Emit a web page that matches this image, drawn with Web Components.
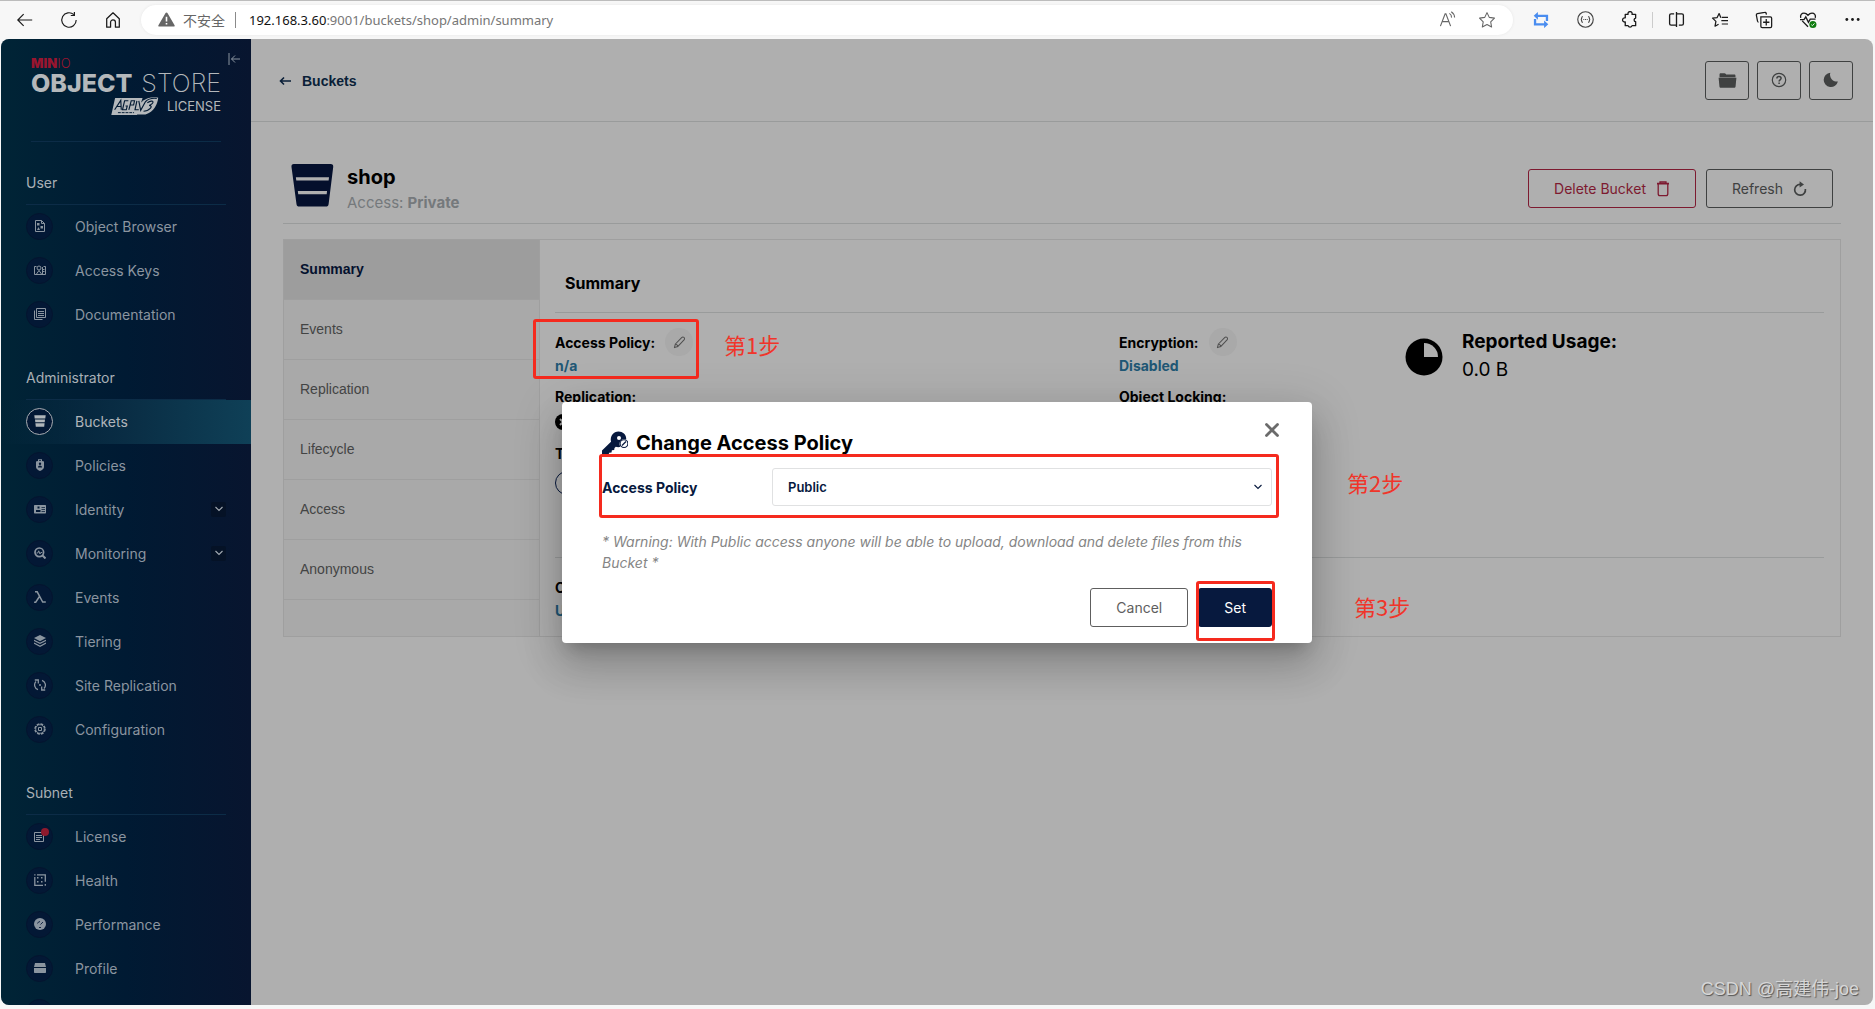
<!DOCTYPE html>
<html lang="en">
<head>
<meta charset="utf-8">
<title>MinIO Console</title>
<style>
  html, body { height: 100%; }
  body { margin: 0; display: flex; flex-direction: column; background: #f6f7f7; font-family: Inter, "Noto Sans CJK SC", sans-serif; font-size: 14px; overflow: hidden; }
</style>
</head>
<body>
<browser-bar></browser-bar>
<console-app></console-app>

<script>
const define = (name, html, setup) => {
  const template = document.createElement('template');
  template.innerHTML = html;
  customElements.define(name, class extends HTMLElement {
    constructor() {
      super();
      this.attachShadow({ mode: 'open' }).append(template.content.cloneNode(true));
    }
    connectedCallback() { if (setup) setup.call(this, this.shadowRoot); }
  });
};

/* Stroked icons inherit currentColor; every entry is [viewBox, markup]. */
const S = 'fill="none" stroke="currentColor"';
const ICONS = {
  back: ['0 0 20 20', `<path ${S} stroke-width="1.3" d="M18 10H2M8.500 3.500 2 10l6.500 6.500"/>`],
  reload: ['0 0 20 20', `<path ${S} stroke-width="1.3" d="M18 10a8 8 0 1 1-2.6-5.9M16 1.2V5h-4"/>`],
  home: ['0 0 20 20', `<path ${S} stroke-width="1.4" stroke-linejoin="round" d="M3 8.6 10 2l7 6.6V18h-4.300v-5.400a2.700 2.700 0 0 0-5.400 0V18H3z"/>`],
  warn: ['0 0 18 16', `<path fill="currentColor" d="M9 .5c.5 0 .8.2 1 .6l7.600 13c.4.700 0 1.400-.8 1.400H1.200c-.8 0-1.200-.7-.8-1.400l7.600-13c.2-.4.5-.6 1-.6z"/><path stroke="#fff" stroke-width="1.700" d="M9 5v5.200M9 11.700v1.700"/>`],
  read: ['0 0 18 18', `<path ${S} stroke-width="1.200" d="m1.500 16 5-13h.8l5 13M3.300 11.300h7.300M11 2.500a5 5 0 0 1 2.300 4.500M13 .8A7.500 7.500 0 0 1 16.500 7"/>`],
  star: ['0 0 20 20', `<path ${S} stroke-width="1.200" stroke-linejoin="round" d="m10 1.800 2.500 5.300 5.800.8-4.200 4.100 1 5.800-5.100-2.800-5.200 2.800 1-5.800L1.700 7.900l5.800-.8z"/>`],
  swap: ['0 0 18 18', `<path ${S} stroke-width="2.600" d="M4 4.300h11.700V10M14 14H2.300V8"/><path fill="currentColor" d="M5.500 0v8.600L.8 4.300zM12.500 9.500v8.600l4.700-4.300z"/>`],
  braces: ['0 0 18 18', `<circle cx="9" cy="9" r="8.200" ${S} stroke-width="1.200"/><path ${S} stroke-width="1.200" d="M6.200 5.800c-2 0-.6 3.200-2.200 3.200 1.600 0 .2 3.200 2.200 3.200M11.800 5.800c2 0 .6 3.200 2.200 3.200-1.600 0-.2 3.200-2.200 3.200M6.700 9h1M8.500 9h1M10.300 9h1"/>`],
  puzzle: ['0 0 18 18', `<path ${S} stroke-width="1.400" stroke-linejoin="round" d="M4.500 3.500h3a2.200 2.200 0 1 1 4.200 0h3.800v4a2 2 0 0 0-1.600 1.900c0 1 .7 1.800 1.600 2v4.100h-3.800a2.200 2.200 0 0 1-4.200 0h-3v-4a2.200 2.200 0 1 1 0-4.200z"/>`],
  split: ['0 0 18 18', `<path ${S} stroke-width="1.400" d="M9 1v16M6.500 3H3.300C2.300 3 1.700 3.600 1.700 4.500v9c0 .9.6 1.500 1.600 1.500h5.700M9 3h5.700c1 0 1.600.6 1.600 1.500v9c0 .9-.6 1.500-1.600 1.500h-3.200"/>`],
  favs: ['0 0 20 18', `<path ${S} stroke-width="1.400" stroke-linejoin="round" d="M11 6.500 9 1.800 6.800 6.300l-5.200.6 3.800 3.600-1 5.500 4-2.300M12 6h7M11.500 9.800H19M12 13.500h7"/>`],
  collect: ['0 0 20 20', `<path ${S} stroke-width="1.400" d="M7 6.500h10c1 0 1.500.5 1.500 1.500v9c0 1-.5 1.500-1.500 1.500H8c-1 0-1.500-.5-1.500-1.500V6.500zM4 12.500c-.7-.1-1-.5-1.200-1.200L1.500 4.500C1.300 3.500 1.800 3 2.700 2.800l8-1.300c1-.2 1.500.2 1.700 1l.3 1.500M12.500 9v7M9 12.500h7"/>`],
  heart: ['0 0 20 18', `<path ${S} stroke-width="1.500" d="M1.800 6.500C1 3 3 1.300 5.500 1.300c2 0 3.300 1 4.500 2.400 1.200-1.400 2.500-2.400 4.500-2.400 2.500 0 4.500 1.700 3.700 5.200M3.500 10 10 16.500M1 8.500h4.500l2-3 3 6 2-3.500h6"/><circle cx="15.500" cy="14" r="4" fill="#107c10"/><path d="m13.700 14.200 1.300 1.200 2.300-2.600" fill="none" stroke="#fff"/>`],
  dots: ['0 0 18 18', `<g fill="currentColor"><circle cx="3" cy="9" r="1.500"/><circle cx="9" cy="9" r="1.500"/><circle cx="15" cy="9" r="1.500"/></g>`],
  collapse: ['0 0 12 12', `<path ${S} d="M1 0v12M12 6H3.500M7 2.500 3.500 6 7 9.500"/>`],
  arrow: ['0 0 12 10', `<path ${S} stroke-width="1.600" d="M12 5H2M5 1.500 1.500 5 5 8.500"/>`],
  folder: ['0 0 20 16', `<path fill="currentColor" d="M1.500 1.500C1.500.6 2 .2 2.800.2h4c.7 0 1 .2 1.400.8l.4.600h8.600c.9 0 1.300.4 1.300 1.200v1.600H1.500zM.5 5h19l-.9 9.300c-.1 1-.6 1.500-1.600 1.500H3c-1 0-1.500-.5-1.600-1.500z"/>`],
  help: ['0 0 16 16', `<circle cx="8" cy="8" r="6.700" ${S} stroke-width="1.200"/><path ${S} stroke-width="1.500" d="M5.900 6.600c0-1.300.9-2.100 2.100-2.100s2.100.7 2.100 1.800c0 1.500-2 1.500-2 3.100M8.100 10.500v1.500"/>`],
  moon: ['0 0 16 16', `<path fill="currentColor" d="M7.300.7A6.900 6.900 0 0 0 14.900 9.500 7.200 7.200 0 1 1 7.300.7z"/>`],
  bucket: ['0 0 44 44', `<path fill="currentColor" d="M3 0h37.500c2 0 3 1.300 2.700 3l-4.700 38c-.2 1.800-1.200 2.600-2.800 2.600H8.400c-1.600 0-2.600-.8-2.800-2.600L.5 3C.200 1.300 1.200 0 3 0zM5 13.500l.4 3.400h33.100l.4-3.400zM7 27.500l.4 3.400h29.100l.4-3.400z"/>`],
  trash: ['0 0 14 16', `<path ${S} stroke-width="1.300" d="M4 2.300V1h6v1.300M2.200 3v9.800c0 1.300.6 1.900 1.800 1.900h6c1.200 0 1.800-.6 1.800-1.900V3"/><path ${S} stroke-width="1.700" d="M1 2.700h12"/>`],
  refresh: ['0 0 14 16', `<path ${S} stroke-width="1.700" d="M7.500 3.400A5.400 5.400 0 1 0 12.400 8"/><path fill="currentColor" d="M6.600.2v6.400L11 3.400z"/>`],
  pencil: ['0 0 14 14', `<path ${S} stroke-width="1.100" stroke-linejoin="round" d="M1.500 12.500 2.600 8.600 9.300 1.700c.8-.8 1.800-.8 2.500-.1.800.7.800 1.800.1 2.500L5.300 11.200zM2.600 8.600c1.300.3 2.300 1.300 2.700 2.600"/>`],
  pie: ['0 0 38 38', `<circle cx="19" cy="19" r="18.500" fill="#000"/><path fill="#afafaf" d="M19 5a14 14 0 0 1 14 14H19z"/>`],
  disabled: ['0 0 16 16', `<circle cx="8" cy="8" r="8"/><path stroke="#a5a5a5" stroke-width="2" d="m5 5 6 6M11 5l-6 6"/>`],
  key: ['0 0 26 24', `<path fill="currentColor" d="M16.500.5c4.300 0 7.700 3 7.700 7v1a4.800 4.800 0 0 0-5.700 7.300c-1.700.5-3.300.400-4.700-.1l-1.300 1.400-.3 2-2.300.2-.4 2.300-2.300.100L6.500 23.500H0v-4l9-8.700C7.800 5 11.500.5 16.500.5z"/><circle cx="17" cy="7" r="2" fill="#fff"/><circle cx="22" cy="12.600" r="3.900" fill="#fff" stroke="currentColor" stroke-width="1.100"/><path stroke="currentColor" stroke-width="1.300" d="m20 14.500 4-4"/>`],
  close: ['0 0 14 14', `<path ${S} stroke-width="2.800" stroke-linecap="round" d="m1.500 1.500 11 11M12.500 1.500l-11 11"/>`],
  down: ['0 0 8 6', `<path ${S} stroke-width="1.100" d="m.5 1 3.500 3.500L7.500 1"/>`],
  browser: ['0 0 12 12', `<path ${S} d="M1.500.5h6l3 3v8h-9zM7.500.5v3h3"/><path fill="currentColor" d="M3 3h2.500v2.500H3zM6.500 6h2.500v2.500H6.500zM3 10l1.500-3L6 10z"/>`],
  keys: ['0 0 12 12', `<path ${S} d="M2.500 2.500h-2v8h11v-8h-2M2.500 10 5 6.500 7.500 10M9 5.500h1.500M9 7.500h1.500"/><circle cx="5" cy="4" r="2" ${S}/><path fill="currentColor" d="M8 3h1v7H8z"/>`],
  docs: ['0 0 12 12', `<path ${S} d="M2.500.5h9v9h-9zM.5 2.500v9h8"/><path ${S} d="M4 3.500h6M4 5.500h6M4 7.500h6"/>`],
  buckets: ['0 0 12 12', `<path fill="currentColor" d="M.3.200h11.400l-.4 3.200H.7zM1 4.400h10l-.3 2.800H1.300zM1.400 8.200h9.200l-.4 3.600H1.800z"/>`],
  policy: ['0 0 12 12', `<path fill="currentColor" fill-rule="evenodd" d="M4 2V.3h4V2l2 .5V8c0 1.800-1.700 3-4 4-2.300-1-4-2.200-4-4V2.500zM5 1.200V2h2v-.8zM6 3.600a1.200 1.200 0 1 0 0 2.400 1.200 1.200 0 0 0 0-2.400zM4 8.600h4c0-1.300-.7-2-2-2s-2 .7-2 2z"/>`],
  identity: ['0 0 12 12', `<path fill="currentColor" fill-rule="evenodd" d="M1 2h10c.7 0 1 .3 1 1v6.500c0 .7-.3 1-1 1H1c-.7 0-1-.3-1-1V3c0-.7.300-1 1-1zM3.500 3.500v2h2v-2zM2 7v2h4.500V7zM7.500 4v.8H11V4zM7.500 6v.8H11V6zM7.500 8v.8H11V8z"/>`],
  monitor: ['0 0 12 12', `<circle cx="5.300" cy="5.300" r="4.300" ${S} stroke-width="1.700"/><path ${S} d="M2.500 6h1.300l.9-2.200L6 7l.8-1.500h1.400"/><path ${S} stroke-width="2" d="m8.500 8.500 3 3"/>`],
  lambda: ['0 0 12 12', `<path ${S} stroke-width="1.500" d="M1 .8h2.200L8.700 11H11.800M5.800 5 1.700 11.200H.1"/>`],
  tiers: ['0 0 12 12', `<path fill="currentColor" d="m6 0 6 3-6 3.200L0 3z"/><path ${S} stroke-width="1.200" d="M0 5.200 6 8.300l6-3.100M0 8 6 11.200 12 8"/>`],
  siterep: ['0 0 12 12', `<path ${S} stroke-width="1.300" d="M4 10.700A5 5 0 0 1 2 2.500M8 1.300a5 5 0 0 1 2 8.200M.8 1h3.500v3.400M11.200 11H7.700V7.600"/><circle cx="6" cy="6" r="1" fill="currentColor"/>`],
  config: ['0 0 12 12', `<circle cx="6" cy="6" r="5" ${S} stroke-width="1.500" stroke-dasharray="2.800 1.100"/><circle cx="6" cy="6" r="4.300" ${S} stroke-width=".8"/><path ${S} d="M4.500 4.500h3v3h-3z"/>`],
  license: ['0 0 12 12', `<path ${S} d="M.5 2.500h9v9h-9zM2 5.500h6M2 7.500h6M2 9.500h4"/>`],
  health: ['0 0 12 12', `<path ${S} stroke-width="1.300" d="M3 .8h8.300v7M9 11.300H.8V3M.2.8h1.300M11.300 10v1.800"/><path fill="currentColor" d="M3 3h1.500v1.500H3zM7 3h1.500v1.500H7zM3 7h1.500v1.500H3zM7 7h1.500v1.500H7z"/>`],
  perf: ['0 0 12 12', `<circle cx="6" cy="6" r="6" fill="currentColor"/><path stroke="#071a3a" fill="none" stroke-width=".9" d="M3.500 5.500A3 3 0 0 1 6 3.500M6.500 6.500 9 4M5 9.500h2"/>`],
  profile: ['0 0 12 12', `<path fill="currentColor" d="M1 1h10l1 4H0zM0 6h12v4c0 .7-.3 1-1 1H1c-.7 0-1-.3-1-1z"/>`],
  agpl: ['0 0 50 19', `<path fill="currentColor" d="M4 1h29l-6 18H0z"/><path fill="currentColor" d="M31 6C36 1 44-.5 49.500.8 49 7 45 16 36 18.500H25z"/><path fill="none" stroke="#021a33" stroke-width="1.200" d="M3.500 13.500 10 3.500 10.500 13.500M6 10h4.500M18 4h-4l-2.200 9.500h4l1-4H15M18.500 13.500 21 4h3.500l-1 4.500h-4M27 4l-2 9.500h4M29 4l2 10 5-9M38 6c7-4 8 0 2 3 5 0 0 6-6 6M36 5c3-3 8-4 12-3.500"/><path stroke="#021a33" stroke-width="1" stroke-dasharray="3 1" d="M7 16.500h17"/>`]
};

define('ui-icon', `<style>:host{display:block;flex:none;line-height:0}svg{display:block}</style>`, function (root) {
  const [box, body] = ICONS[this.getAttribute('name')];
  const [, , w, h] = box.split(' ');
  const width = this.getAttribute('size') || w;
  root.innerHTML += `<svg aria-hidden="true" width="${width}" height="${Math.round(width * h / w)}" viewBox="${box}">${body}</svg>`;
});

define('browser-bar', `
<style>
  :host{display:flex;align-items:center;flex:none;height:39px;box-sizing:border-box;border-top:1px solid #bcbcbc;padding:0 1px 5px 3px;color:#1b1b1b;background:#f7f7f7}
  button{all:unset;width:44px;height:28px;display:flex;align-items:center;justify-content:center}
  .address{flex:1;display:flex;align-items:center;height:30px;border-radius:15px;background:#fff;margin:4px 6px 0 6px;padding:0 6px 0 17px;color:#666;box-shadow:0 0 3px #e6e6e6}
  .address button{width:40px}
  .tools{display:flex;align-items:center;padding-top:4px}
  .safe{padding:0 10px 0 8px;font-size:14px}
  .rule{width:1px;height:16px;background:#8a8a8a}
  .url{flex:1;padding-left:13px;font:13px/20px "Noto Sans","Open Sans",sans-serif;color:#767676}
  .url b{font-weight:400;color:#111}
  .sep{width:1px;height:16px;background:#ccc;margin:0 1px}
  .blue{color:#4a8df0}.grey{color:#444}
</style>
<div class="tools">
  <button aria-label="Back"><ui-icon name="back" size="18"></ui-icon></button>
  <button aria-label="Reload"><ui-icon name="reload" size="18"></ui-icon></button>
  <button aria-label="Home"><ui-icon name="home" size="18"></ui-icon></button>
</div>
<div class="address">
  <ui-icon name="warn" size="17"></ui-icon><span class="safe">不安全</span><span class="rule"></span>
  <span class="url"><b>192.168.3.60</b>:9001/buckets/shop/admin/summary</span>
  <button aria-label="Read aloud"><ui-icon name="read" size="17"></ui-icon></button>
  <button aria-label="Add to favourites"><ui-icon name="star" size="18"></ui-icon></button>
</div>
<div class="tools">
  <button class="blue" aria-label="Proxy"><ui-icon name="swap" size="16"></ui-icon></button>
  <button class="grey" aria-label="Formatter"><ui-icon name="braces" size="17"></ui-icon></button>
  <button aria-label="Extensions"><ui-icon name="puzzle" size="17"></ui-icon></button>
  <span class="sep"></span>
  <button aria-label="Split screen"><ui-icon name="split" size="17"></ui-icon></button>
  <button aria-label="Favourites"><ui-icon name="favs" size="18"></ui-icon></button>
  <button aria-label="Collections"><ui-icon name="collect" size="18"></ui-icon></button>
  <button aria-label="Browser essentials"><ui-icon name="heart" size="18"></ui-icon></button>
  <button aria-label="Menu"><ui-icon name="dots" size="17"></ui-icon></button>
</div>`);

define('nav-item', `
<style>
  :host{display:block}
  a{display:flex;align-items:center;height:42px;padding:0 25px 2px;color:#8b95a0;text-decoration:none}
  .disc{position:relative;display:flex;align-items:center;justify-content:center;width:27px;height:27px;box-sizing:border-box;border-radius:50%;background:#031835;border:1px solid #04142f;margin-right:22px}
  .label{flex:1}
  .toggle{display:none;width:15px;height:15px;align-items:center;justify-content:center;background:#051226;border-radius:2px;color:#a4abb3}
  :host([expandable]) .toggle{display:flex}
  :host([active]) a{background:linear-gradient(90deg,rgba(14,62,83,0) 0%,#0a2f46 55%,#0f4057 100%);color:#b0b5ba}
  :host([active]) .disc{border-color:#a9adb2}
  :host([alert]) .disc::after{content:"";position:absolute;width:8px;height:8px;border-radius:50%;background:#8f1a2d;right:3px;top:4px}
</style>
<a href="#"><span class="disc"></span><span class="label"><slot></slot></span><span class="toggle"><ui-icon name="down" size="8"></ui-icon></span></a>`,
function (root) {
  const icon = document.createElement('ui-icon');
  icon.setAttribute('name', this.getAttribute('icon'));
  icon.setAttribute('size', '12');
  root.querySelector('.disc').append(icon);
});

define('nav-group', `
<style>
  :host{display:block}
  h2{margin:0 25px;padding:31px 0 11px;border-bottom:1px solid #0c2c47;font-size:14px;line-height:20px;font-weight:400;color:#a9b0b6}
</style>
<h2></h2><slot></slot>`, function (root) { root.querySelector('h2').textContent = this.getAttribute('heading'); });

define('app-sidebar', `
<style>
  :host{display:block;position:relative;flex:none;width:250px;overflow:hidden;background:linear-gradient(90deg,#002436 0%,#001a33 50%,#08152f 100%)}
  .logo{margin:0 30px;padding:18px 0 26px;border-bottom:1px solid #0c2c47;color:#b4b8bb}
  .brand{font-size:13px;line-height:12px;color:#98152f;font-weight:900}
  .brand span{font-weight:300}
  .name{display:flex;justify-content:space-between;font-size:25px;line-height:28px;font-weight:800}
  .name span{font-weight:200}
  .license{display:flex;justify-content:flex-end;align-items:center;gap:8px;font-size:13px;line-height:18px}
  button{all:unset;position:absolute;right:11px;top:14px;color:#8b95a0}
</style>
<div class="logo">
  <div class="brand">MIN<span>IO</span></div>
  <div class="name">OBJECT<span>STORE</span></div>
  <div class="license"><ui-icon name="agpl" size="48"></ui-icon>LICENSE</div>
</div>
<button aria-label="Collapse menu"><ui-icon name="collapse" size="12"></ui-icon></button>
<nav>
  <nav-group heading="User">
    <nav-item icon="browser">Object Browser</nav-item>
    <nav-item icon="keys">Access Keys</nav-item>
    <nav-item icon="docs">Documentation</nav-item>
  </nav-group>
  <nav-group heading="Administrator">
    <nav-item icon="buckets" active>Buckets</nav-item>
    <nav-item icon="policy">Policies</nav-item>
    <nav-item icon="identity" expandable>Identity</nav-item>
    <nav-item icon="monitor" expandable>Monitoring</nav-item>
    <nav-item icon="lambda">Events</nav-item>
    <nav-item icon="tiers">Tiering</nav-item>
    <nav-item icon="siterep">Site Replication</nav-item>
    <nav-item icon="config">Configuration</nav-item>
  </nav-group>
  <nav-group heading="Subnet">
    <nav-item icon="license" alert>License</nav-item>
    <nav-item icon="health">Health</nav-item>
    <nav-item icon="perf">Performance</nav-item>
    <nav-item icon="profile">Profile</nav-item>
    <nav-item icon="monitor"></nav-item>
  </nav-group>
</nav>`);

define('action-button', `
<style>
  :host{display:block;color:#3f4141}
  button{display:flex;align-items:center;gap:10px;height:39px;box-sizing:border-box;margin:0;padding:0 25px;border:1px solid currentColor;border-radius:3px;background:transparent;color:inherit;font:inherit;font-size:14px;white-space:nowrap}
  :host([kind=icon]) button{padding:0 10px;min-width:44px;justify-content:center}
  :host([kind=danger]){color:#7d1a30}
  :host([kind=plain]){color:#5e5e5e}
  :host([kind=solid]) button{background:#07193e;border-color:#07193e;color:#fff}
</style>
<button type="button"><slot></slot></button>`, function (root) {
  if (this.title) root.querySelector('button').setAttribute('aria-label', this.title);
});

define('page-header', `
<style>
  :host{display:flex;align-items:center;justify-content:space-between;height:82px;border-bottom:1px solid #999b9b;padding:0 20px 0 28px}
  a{display:flex;align-items:center;gap:11px;padding-top:2px;color:#0a1f38;font:bold 14px/20px "Liberation Sans",Arial,sans-serif;text-decoration:none}
  .actions{display:flex;gap:8px}
</style>
<a href="#"><ui-icon name="arrow" size="12"></ui-icon>Buckets</a>
<div class="actions">
  <action-button kind="icon" title="Object browser"><ui-icon name="folder" size="19"></ui-icon></action-button>
  <action-button kind="icon" title="Help"><ui-icon name="help" size="16"></ui-icon></action-button>
  <action-button kind="icon" title="Dark mode"><ui-icon name="moon" size="16"></ui-icon></action-button>
</div>`);

define('bucket-header', `
<style>
  :host{display:flex;align-items:flex-start;padding:0 8px 7px;border-bottom:1px solid #999b9b}
  ui-icon.b{color:#040f2c}
  .text{flex:1;padding-left:13px}
  h1{margin:0;font-size:20px;line-height:26px;font-weight:700;color:#000}
  p{margin:0;font-size:15px;line-height:26px;color:#75797c}
  p b{font-weight:700}
  .actions{display:flex;gap:10px;padding-top:5px}
</style>
<ui-icon class="b" name="bucket" size="43"></ui-icon>
<div class="text"><h1>shop</h1><p>Access: <b>Private</b></p></div>
<div class="actions">
  <action-button kind="danger">Delete Bucket<ui-icon name="trash" size="14"></ui-icon></action-button>
  <action-button>Refresh<ui-icon name="refresh" size="14"></ui-icon></action-button>
</div>`);

define('side-tab', `
<style>
  :host{display:block}
  button{display:block;width:100%;height:60px;margin:0;padding:0 16px 2px;border:0;border-bottom:1px solid #9f9f9f;background:transparent;text-align:left;font:14px "Liberation Sans",Arial,sans-serif;color:#434444}
  :host([selected]) button{background:#9d9d9d;color:#04112e;font-weight:bold}
</style>
<button type="button" role="tab"><slot></slot></button>`);

define('info-field', `
<style>
  :host{display:flex;flex-direction:column;align-items:flex-start;font-size:14px;line-height:20px;color:#000}
  .label{display:flex;align-items:flex-end;gap:10px;font-weight:700}
  :host([editable]) ::slotted([slot=label]){line-height:26px}
  button{all:unset;display:none;width:28px;height:28px;border-radius:50%;background:#a9a9a9;color:#4f4f4f;align-items:center;justify-content:center}
  :host([editable]) button{display:flex}
  .value{color:#205775;font-weight:700}
</style>
<div class="label"><slot name="label"></slot><button aria-label="Edit"><ui-icon name="pencil" size="13"></ui-icon></button></div>
<div class="value"><slot></slot></div>`);

define('step-frame', `
<style>:host{display:block;position:absolute;box-sizing:border-box;border:3px solid #f52a1e;border-radius:3px;pointer-events:none}</style>`);
define('step-text', `
<style>:host{display:block;position:absolute;font:22px/30px "Noto Sans CJK SC",sans-serif;color:#f0352a;white-space:nowrap}</style><slot></slot>`);

define('summary-panel', `
<style>
  :host{display:block;position:relative;padding:31px 16px 15px 15px}
  h2{margin:0;padding:0 10px 17px;border-bottom:1px solid #999b9b;font-size:16px;line-height:24px;font-weight:700;color:#000}
  .grid{display:grid;grid-template-columns:4fr 2fr 3fr;padding-top:15px}
  .col{display:flex;flex-direction:column;gap:11px}
  .off{padding:7px 0 3px}
  .chip{margin-top:7px;height:24px;width:90px;box-sizing:border-box;border:1px solid #07193e;border-radius:12px}
  .usage{display:flex;gap:19px;padding-left:4px;color:#000}
  .usage ui-icon{padding-top:10px}
  .usage h3{margin:0;font-size:19px;line-height:28px;font-weight:700}
  .usage p{margin:0;font-size:19px;line-height:28px}
  .status{margin-top:62px;padding-top:20px;border-top:1px solid #999b9b}
  .status div{padding-top:3px}
  .frame1{left:-7px;top:79px;width:166px;height:60px}
  .text1{left:184px;top:89px}
</style>
<h2>Summary</h2>
<div class="grid">
  <div class="col">
    <info-field editable><span slot="label">Access Policy:</span>n/a</info-field>
    <info-field><span slot="label">Replication:</span><ui-icon class="off" name="disabled" size="16" style="color:#000"></ui-icon></info-field>
    <info-field><span slot="label">Tags:</span><div class="chip"></div></info-field>
  </div>
  <div class="col">
    <info-field editable><span slot="label">Encryption:</span>Disabled</info-field>
    <info-field><span slot="label">Object Locking:</span></info-field>
  </div>
  <div class="usage"><ui-icon name="pie" size="38"></ui-icon><div><h3>Reported Usage:</h3><p>0.0 B</p></div></div>
</div>
<div class="status"><info-field><span slot="label">Current Status:</span><div>Unversioned (Default)</div></info-field></div>
<step-frame class="frame1"></step-frame>
<step-text class="text1">第1步</step-text>`);

define('bucket-details', `
<style>
  :host{display:grid;grid-template-columns:256px 1fr;border:1px solid #9f9f9f;margin-top:15px}
  .tabs{background:#a9a9a9;border-right:1px solid #9f9f9f}
</style>
<div class="tabs" role="tablist">
  <side-tab selected>Summary</side-tab><side-tab>Events</side-tab><side-tab>Replication</side-tab>
  <side-tab>Lifecycle</side-tab><side-tab>Access</side-tab><side-tab>Anonymous</side-tab>
</div>
<summary-panel></summary-panel>`);

define('policy-dialog', `
<style>
  :host{position:absolute;inset:0;padding-top:1px;display:flex;align-items:center;justify-content:center}
  .box{position:relative;width:750px;box-sizing:border-box;padding:26px 40px 16px;background:#fff;border-radius:4px;box-shadow:0 11px 15px -7px rgba(0,0,0,.2),0 24px 38px 3px rgba(0,0,0,.14),0 9px 46px 8px rgba(0,0,0,.12)}
  h2{display:flex;align-items:center;gap:8px;margin:0;font-size:20px;line-height:30px;font-weight:700;color:#000}
  h2 ui-icon{color:#07193e}
  .close{all:unset;position:absolute;right:33px;top:21px;color:#6b6b6b}
  .row{display:flex;align-items:center;margin-top:10px;color:#07193e}
  label{width:170px;font-weight:700}
  .select{flex:1;display:grid;align-items:center}
  select{grid-area:1/1;appearance:none;width:100%;height:38px;padding:0 15px;border:1px solid #e0e1e2;border-radius:3px;background:#fff;color:#07193e;font:inherit;font-size:13px;font-weight:600}
  .select ui-icon{grid-area:1/1;justify-self:end;margin-right:10px;pointer-events:none}
  p{margin:25px 0 15px;font-size:14px;line-height:21px;font-style:italic;color:#858585}
  .actions{display:flex;justify-content:flex-end;gap:10px}
  .frame2{left:37px;top:52px;width:680px;height:64px}
  .frame3{left:634px;top:179px;width:79px;height:60px}
  .text2{left:785px;top:65px}
  .text3{left:792px;top:189px}
</style>
<div class="box" role="dialog" aria-labelledby="title">
  <h2 id="title"><ui-icon name="key" size="26"></ui-icon>Change Access Policy</h2>
  <button class="close" aria-label="Close"><ui-icon name="close" size="14"></ui-icon></button>
  <div class="row"><label for="policy">Access Policy</label>
    <div class="select"><select id="policy"><option>Public</option></select><ui-icon name="down" size="8"></ui-icon></div></div>
  <p>* Warning: With Public access anyone will be able to upload, download and delete files from this Bucket *</p>
  <div class="actions"><action-button kind="plain">Cancel</action-button><action-button kind="solid">Set</action-button></div>
  <step-frame class="frame2"></step-frame><step-frame class="frame3"></step-frame>
  <step-text class="text2">第2步</step-text><step-text class="text3">第3步</step-text>
</div>`);

define('water-mark', `
<style>:host{display:block;position:absolute;right:14px;bottom:3px;font:18px/26px "Liberation Sans","Noto Sans CJK SC",sans-serif;color:#d6d6d6;text-shadow:1px 1px 1px #555}</style><slot></slot>`);

define('console-app', `
<style>
  :host{position:relative;display:flex;flex:1;min-height:0;margin:0 2px 4px 1px;border-radius:8px;overflow:hidden;background:#afafaf}
  main{flex:1;min-width:0}
  .page{padding:42px 32px}
</style>
<app-sidebar></app-sidebar>
<main>
  <page-header></page-header>
  <div class="page"><bucket-header></bucket-header><bucket-details></bucket-details></div>
</main>
<policy-dialog></policy-dialog>
<water-mark>CSDN @高建伟-joe</water-mark>`);
</script>
</body>
</html>
